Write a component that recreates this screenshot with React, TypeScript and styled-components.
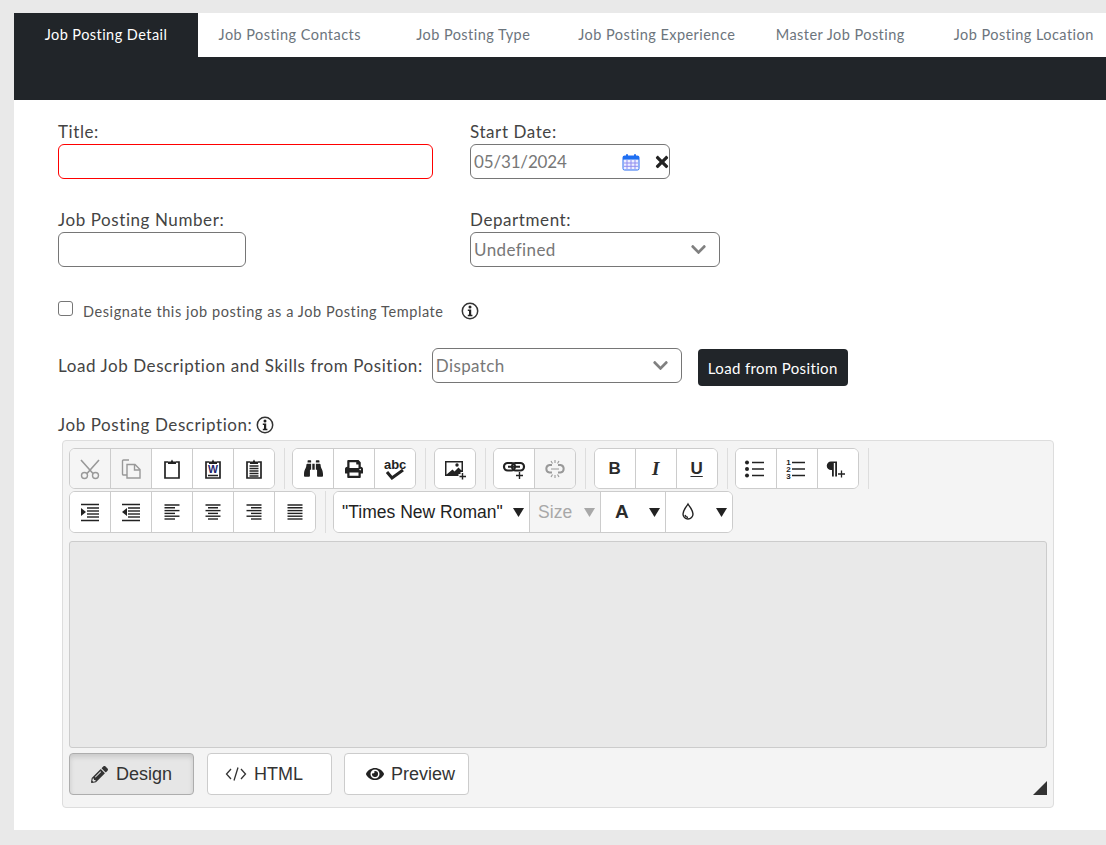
import React from "react";
import styled, { createGlobalStyle } from "styled-components";
import { FaBinoculars, FaPrint, FaPencilAlt, FaEye, FaTimes, FaChevronDown } from "react-icons/fa";

const GlobalStyle = createGlobalStyle`
  html, body {
    margin: 0;
    height: 845px;
    overflow: hidden;
    background: #e9e9e9;
  }
  * { box-sizing: border-box; }
`;

const Card = styled.div`
  margin: 13px 0 0 14px;
  height: 817px;
  background: #fff;
  font-family: "Lato", "Noto Sans", sans-serif;
  overflow: hidden;
`;

const TabBar = styled.div`
  display: grid;
  grid-template-columns: 184px repeat(5, 183.5px);
  height: 44px;
`;

const Tab = styled.div<{ $active?: boolean }>`
  display: flex;
  align-items: center;
  justify-content: center;
  padding-bottom: 1px;
  font-size: 14.5px;
  letter-spacing: 0.45px;
  white-space: nowrap;
  color: ${(p) => (p.$active ? "#fff" : "#6c757d")};
  background: ${(p) => (p.$active ? "#212529" : "#fff")};
`;

const DarkStrip = styled.div`
  height: 43px;
  background: #212529;
`;

const Form = styled.div`
  padding: 20px 52px 0 44px;
`;

const FieldGrid = styled.div`
  display: grid;
  grid-template-columns: 412px 1fr;
  row-gap: 29px;
`;

const Field = styled.div`
  display: flex;
  flex-direction: column;
  gap: 1px;
`;

const Label = styled.label`
  font-size: 17px;
  line-height: 23px;
  letter-spacing: 0.58px;
  color: #444;
  white-space: nowrap;
`;

const RowLabel = styled(Label)`
  margin-top: 6px;
`;

const TextBox = styled.div<{ $w: number; $invalid?: boolean }>`
  width: ${(p) => p.$w}px;
  height: 35px;
  background: #fff;
  border: 1px solid ${(p) => (p.$invalid ? "#f00" : "#767676")};
  border-radius: 6px;
`;

const ComboBox = styled.div<{ $w: number; $ls?: number }>`
  width: ${(p) => p.$w}px;
  height: 35px;
  display: flex;
  align-items: center;
  justify-content: space-between;
  padding: 0 12px 0 3px;
  border: 1px solid #767676;
  border-radius: 6px;
  font-size: 17px;
  letter-spacing: ${(p) => p.$ls ?? 0.4}px;
  color: #777;
`;

const ComboText = styled.span`
  padding-bottom: 1px;
`;

const DateIcons = styled.div`
  display: flex;
  align-items: center;
  gap: 13px;
  margin-right: -14px;
`;

const CheckRow = styled.div`
  display: flex;
  align-items: center;
  height: 24px;
  margin-top: 32px;
`;

const CheckBox = styled.div`
  width: 15px;
  height: 15px;
  margin-top: -6px;
  border: 1px solid #767676;
  border-radius: 3px;
`;

const CheckText = styled.span`
  margin: 0 17px 0 10px;
  font-size: 14.5px;
  letter-spacing: 0.58px;
  color: #555;
`;

const LoadRow = styled.div`
  display: flex;
  align-items: flex-start;
  margin-top: 25px;
  gap: 9px;
`;

const DarkButton = styled.div`
  width: 150px;
  height: 37px;
  margin: 1px 0 0 7px;
  display: flex;
  align-items: center;
  justify-content: center;
  background: #212529;
  color: #fff;
  border-radius: 4px;
  font-size: 15px;
  letter-spacing: 0.35px;
`;

const DescLabel = styled.div`
  display: flex;
  align-items: center;
  gap: 4px;
  margin-top: 27px;
`;

const Editor = styled.div`
  margin: 4px 0 0 4px;
  width: 992px;
  height: 368px;
  padding: 7px 6px 0;
  background: #f4f4f4;
  border: 1px solid #ddd;
  border-radius: 4px;
  font-family: "Liberation Sans", Arial, sans-serif;
`;

const ToolRow = styled.div`
  display: flex;
  margin-bottom: 2px;
`;

const ToolGroup = styled.div`
  display: flex;
  background: #fff;
  border: 1px solid #ccc;
  border-radius: 6px;
  overflow: hidden;
  &:first-child {
    margin-right: -0.4px;
  }
`;

const Sep = styled.div`
  width: 1px;
  margin: 0 7.5px 0 9px;
  background: #ddd;
`;

const ToolButton = styled.div<{ $off?: boolean; $tall?: boolean }>`
  width: 41px;
  height: ${(p) => (p.$tall ? 40 : 39)}px;
  display: flex;
  align-items: center;
  justify-content: center;
  border-right: 1px solid #ccc;
  color: ${(p) => (p.$off ? "#999" : "#222")};
  background: ${(p) => (p.$off ? "#f5f5f5" : "#fff")};
  &:last-child {
    width: 40px;
    border-right: none;
  }
`;

const DropButton = styled.div<{ $w: number; $off?: boolean; $pad?: number }>`
  width: ${(p) => p.$w}px;
  height: 40px;
  display: flex;
  align-items: center;
  justify-content: space-between;
  padding: 0 5px 0 ${(p) => p.$pad ?? 8}px;
  border-right: 1px solid #ccc;
  color: ${(p) => (p.$off ? "#a8a8a8" : "#222")};
  background: ${(p) => (p.$off ? "#f5f5f5" : "#fff")};
  &:last-child {
    border-right: none;
  }
`;

const FontName = styled.span`
  font-size: 17.5px;
  white-space: nowrap;
`;

const Glyph = styled.span<{ $italic?: boolean; $under?: boolean; $big?: boolean }>`
  font-family: ${(p) => (p.$italic ? '"Liberation Serif", serif' : '"Liberation Sans", sans-serif')};
  font-size: ${(p) => (p.$big ? 19 : p.$italic ? 19 : 17)}px;
  font-weight: 700;
  font-style: ${(p) => (p.$italic ? "italic" : "normal")};
  text-decoration: ${(p) => (p.$under ? "underline" : "none")};
  text-underline-offset: 2px;
  color: #2b2b2b;
`;

const Spell = styled.div`
  display: flex;
  flex-direction: column;
  align-items: center;
  line-height: 1;
`;

const SpellText = styled.span`
  font-size: 13px;
  font-weight: 700;
  margin-bottom: -2px;
`;

const EditArea = styled.div`
  height: 207px;
  margin-top: 8px;
  background: #e9e9e9;
  border: 1px solid #ccc;
  border-radius: 3px;
`;

const ModeBar = styled.div`
  display: flex;
  align-items: flex-end;
  gap: 12.5px;
  margin-top: 5px;
`;

const ModeButton = styled.div<{ $active?: boolean; $left?: number; $right?: number }>`
  width: 125px;
  height: 42px;
  display: flex;
  align-items: center;
  justify-content: center;
  gap: ${(p) => (p.$active ? 8 : 7)}px;
  padding: 0 ${(p) => p.$right ?? 0}px 0 ${(p) => p.$left ?? 0}px;
  font-size: 18px;
  color: #333;
  background: ${(p) => (p.$active ? "#e6e6e6" : "#fff")};
  border: 1px solid ${(p) => (p.$active ? "#adadad" : "#ccc")};
  border-radius: 4px;
  box-shadow: ${(p) => (p.$active ? "inset 0 3px 5px rgba(0,0,0,.125)" : "none")};
`;

const Grip = styled.svg`
  margin-left: auto;
`;

const tabs = [
  "Job Posting Detail",
  "Job Posting Contacts",
  "Job Posting Type",
  "Job Posting Experience",
  "Master Job Posting",
  "Job Posting Location",
];

const Ic = ({ children }: { children: React.ReactNode }) => (
  <svg width={24} height={24} viewBox="0 0 24 24" fill="none" stroke="currentColor" strokeWidth="1.4">
    {children}
  </svg>
);

const Lines = ({ ys, x1, x2 }: { ys: number[]; x1: number; x2: number }) => (
  <>
    {ys.map((y) => (
      <path key={y} d={`M${x1} ${y}H${x2}`} />
    ))}
  </>
);

const Clipboard = ({ children }: { children?: React.ReactNode }) => (
  <Ic>
    <path d="M8 5H5v16h14V5h-3" strokeWidth="1.700" />
    <path d="M8 7V4.500h2.800L12 2.500l1.200 2H16V7z" fill="currentColor" stroke="none" />
    {children}
  </Ic>
);

const CutIcon = () => (
  <Ic>
    <path d="M3 3l12 13.500M21 3L9 16.500" strokeWidth="1.600" />
    <circle cx="6.500" cy="18.500" r="3" />
    <circle cx="17.500" cy="18.500" r="3" />
  </Ic>
);

const CopyIcon = () => (
  <Ic>
    <path d="M8 18H4.500a1 1 0 0 1-1-1V4a1 1 0 0 1 1-1H10" />
    <path d="M8 7.500h8l5 5V21H8zM15.500 7.500v5.500H21" />
  </Ic>
);

const InfoIcon = () => (
  <svg width="18" height="18" viewBox="0 0 18 18">
    <circle cx="9" cy="9" r="7.700" fill="none" stroke="#333" strokeWidth="1.500" />
    <circle cx="9" cy="5" r="1.500" fill="#222" />
    <path d="M6.800 7.600h3.400v5.200h1.200v1.500H6.800v-1.500h1.200V9.100H6.800z" fill="#222" />
  </svg>
);

const CalendarIcon = () => (
  <svg width="18" height="18" viewBox="0 0 18 18">
    <rect x="1" y="3" width="16" height="14" rx="1.500" fill="#eef0ff" stroke="#2a6df0" />
    <rect x="1" y="3" width="16" height="3.600" fill="#1f6ff2" />
    <rect x="4" y="1" width="2" height="4" rx="1" fill="#1f6ff2" />
    <rect x="12" y="1" width="2" height="4" rx="1" fill="#1f6ff2" />
    <path d="M5 7v9M9 7v9M13 7v9M2 10h14M2 13.300h14" stroke="#8f8cf0" strokeWidth="1" />
  </svg>
);

const Triangle = () => (
  <svg width={11} height={9} viewBox="0 0 10 8">
    <path d="M0 0h10L5 8z" fill="currentColor" />
  </svg>
);

const Indent = ({ out }: { out?: boolean }) => (
  <Ic>
    <Lines ys={[8, 11, 14, 17]} x1={9} x2={21} />
    <path d="M3 4.500h18M3 20.500h18" />
    <path d={out ? "M8 8v8l-5-4z" : "M3 8v8l5-4z"} fill="currentColor" stroke="none" />
  </Ic>
);

const Align = ({ rows }: { rows: [number, number][] }) => (
  <Ic>
    {rows.map(([a, b], i) => (
      <path key={i} d={`M${a} ${5 + i * 2.8}H${b}`} strokeWidth="1.400" />
    ))}
  </Ic>
);

const row1: { el: React.ReactNode; off?: boolean }[][] = [
  [
    { el: <CutIcon />, off: true },
    { el: <CopyIcon />, off: true },
    { el: <Clipboard /> },
    {
      el: (
        <Clipboard>
          <text x="12" y="15.500" fontSize="10.500" fontWeight="700" fontFamily="Liberation Sans" textAnchor="middle" fill="#23236b" stroke="none">W</text>
          <path d="M7 18.500h10" />
        </Clipboard>
      ),
    },
    { el: <Clipboard><Lines ys={[9, 11.5, 14, 16.5, 19]} x1={7.5} x2={16.5} /></Clipboard> },
  ],
  [
    { el: <FaBinoculars size={19} /> },
    { el: <FaPrint size={18} /> },
    {
      el: (
        <Spell>
          <SpellText>abc</SpellText>
          <svg width="20" height="11" viewBox="0 0 20 11">
            <path d="M2 3l5 6 11-8" fill="none" stroke="currentColor" strokeWidth="3" />
          </svg>
        </Spell>
      ),
    },
  ],
  [
    {
      el: (
        <Ic>
          <path d="M2 4h18v15H2z" fill="#222" stroke="none" />
          <path d="M3.500 5.500h15v8l-3-3-4 4-2-2-6 5z" fill="#fff" stroke="none" />
          <circle cx="14" cy="8" r="1.700" fill="#222" stroke="none" />
          <path d="M19.500 15v8M15.500 19h8" fill="none" stroke="#f8f8f8" strokeWidth="4" />
          <path d="M19.500 16v6.500M16.500 19.500h6.500" strokeWidth="1.400" />
        </Ic>
      ),
    },
  ],
  [
    {
      el: (
        <Ic>
          <rect x="2" y="6" width="11" height="7.500" rx="3.700" strokeWidth="2.200" />
          <rect x="10" y="6" width="12" height="7.500" rx="3.700" strokeWidth="2.200" />
          <path d="M6 9.700h12" strokeWidth="2" />
          <path d="M17.500 15v7M14 18.500h7" strokeWidth="1.400" />
        </Ic>
      ),
    },
    {
      el: (
        <Ic>
          <path d="M9 8H6.500a3.800 3.800 0 0 0 0 7.500H9M15 8h2.500a3.800 3.800 0 0 1 0 7.500H15" strokeWidth="2" />
          <path d="M8 12h8M12 3v3M8 4l1.500 2.500M16 4l-1.500 2.500M12 18v3M8 20l1.500-2.500M16 20l-1.500-2.500" strokeWidth="1.100" />
        </Ic>
      ),
      off: true,
    },
  ],
  [
    { el: <Glyph>B</Glyph> },
    { el: <Glyph $italic>I</Glyph> },
    { el: <Glyph $under>U</Glyph> },
  ],
  [
    {
      el: (
        <Ic>
          <circle cx="3" cy="5.500" r="2" fill="currentColor" stroke="none" />
          <circle cx="3" cy="12" r="2" fill="currentColor" stroke="none" />
          <circle cx="3" cy="18.500" r="2" fill="currentColor" stroke="none" />
          <Lines ys={[5.5, 12, 18.5]} x1={8} x2={20} />
        </Ic>
      ),
    },
    {
      el: (
        <Ic>
          <Lines ys={[5.5, 12, 18.5]} x1={7} x2={20} />
          <g fontSize="8" fontWeight="700" fontFamily="Liberation Sans" textAnchor="middle" fill="currentColor" stroke="none">
            <text x="3.500" y="8">1</text>
            <text x="3.500" y="15">2</text>
            <text x="3.500" y="22">3</text>
          </g>
        </Ic>
      ),
    },
    {
      el: (
        <Ic>
          <path d="M6 4.500H5a4 4 0 0 0 0 8.500h1v6.500h1.800V6h1.400v13.500H11V4.500z" fill="currentColor" stroke="none" />
          <path d="M15.500 13.500v7M12 17h7" strokeWidth="1.300" />
        </Ic>
      ),
    },
  ],
];

const row2 = [
  <Indent />,
  <Indent out />,
  <Align rows={[[4.5, 19.5], [4.5, 15], [4.5, 19.5], [4.5, 15], [4.5, 19.5], [4.5, 15]]} />,
  <Align rows={[[4.5, 19.5], [7, 17], [4.5, 19.5], [7, 17], [4.5, 19.5], [7, 17]]} />,
  <Align rows={[[4.5, 19.5], [9, 19.5], [4.5, 19.5], [9, 19.5], [4.5, 19.5], [9, 19.5]]} />,
  <Align rows={[[4.5, 19.5], [4.5, 19.5], [4.5, 19.5], [4.5, 19.5], [4.5, 19.5], [4.5, 19.5]]} />,
];

export default function App() {
  return (
    <>
      <GlobalStyle />
      <Card>
        <TabBar>
          {tabs.map((t, i) => (
            <Tab key={t} $active={i === 0}>{t}</Tab>
          ))}
        </TabBar>
        <DarkStrip />
        <Form>
          <FieldGrid>
            <Field>
              <Label>Title:</Label>
              <TextBox $w={375} $invalid />
            </Field>
            <Field>
              <Label>Start Date:</Label>
              <ComboBox $w={200} $ls={-0.15}>
                <ComboText>05/31/2024</ComboText>
                <DateIcons>
                  <CalendarIcon />
                  <FaTimes size={18} color="#222" />
                </DateIcons>
              </ComboBox>
            </Field>
            <Field>
              <Label>Job Posting Number:</Label>
              <TextBox $w={188} />
            </Field>
            <Field>
              <Label>Department:</Label>
              <ComboBox $w={250}>
                <ComboText>Undefined</ComboText>
                <FaChevronDown size={17} color="#808080" />
              </ComboBox>
            </Field>
          </FieldGrid>

          <CheckRow>
            <CheckBox />
            <CheckText>Designate this job posting as a Job Posting Template</CheckText>
            <InfoIcon />
          </CheckRow>

          <LoadRow>
            <RowLabel>Load Job Description and Skills from Position:</RowLabel>
            <ComboBox $w={250}>
              <ComboText>Dispatch</ComboText>
              <FaChevronDown size={17} color="#808080" />
            </ComboBox>
            <DarkButton>Load from Position</DarkButton>
          </LoadRow>

          <DescLabel>
            <Label>Job Posting Description:</Label>
            <InfoIcon />
          </DescLabel>

          <Editor>
            <ToolRow>
              {row1.map((group, g) => (
                <React.Fragment key={g}>
                  <ToolGroup>
                    {group.map((b, i) => (
                      <ToolButton key={i} $off={b.off}>{b.el}</ToolButton>
                    ))}
                  </ToolGroup>
                  <Sep />
                </React.Fragment>
              ))}
            </ToolRow>
            <ToolRow>
              <ToolGroup>
                {row2.map((el, i) => (
                  <ToolButton key={i} $tall>{el}</ToolButton>
                ))}
              </ToolGroup>
              <Sep />
              <ToolGroup>
                <DropButton $w={196}>
                  <FontName>"Times New Roman"</FontName>
                  <Triangle />
                </DropButton>
                <DropButton $w={71} $off>
                  <FontName>Size</FontName>
                  <Triangle />
                </DropButton>
                <DropButton $w={65} $pad={14}>
                  <Glyph $big>A</Glyph>
                  <Triangle />
                </DropButton>
                <DropButton $w={66} $pad={13}>
                  <svg width="18" height="20" viewBox="0 0 18 20" fill="none" stroke="#222" strokeWidth="1.400">
                    <path d="M9 2c-2 3.500-5 6-5 10a5 5 0 0 0 10 0c0-4-3-6.500-5-10z" />
                    <path d="M6 13c.5 1.500 1.500 2.300 3 2.500" />
                  </svg>
                  <Triangle />
                </DropButton>
              </ToolGroup>
            </ToolRow>
            <EditArea />
            <ModeBar>
              <ModeButton $active>
                <FaPencilAlt size={17} color="#333" />
                Design
              </ModeButton>
              <ModeButton $right={10}>
                <svg width="22" height="16" viewBox="0 0 22 16" fill="none" stroke="#333" strokeWidth="1.300">
                  <path d="M6 3L1.500 8 6 13M16 3l4.500 5L16 13M13 1.500L9 14.500" />
                </svg>
                HTML
              </ModeButton>
              <ModeButton $left={8}>
                <FaEye size={18} color="#222" />
                Preview
              </ModeButton>
              <Grip width="14" height="14" viewBox="0 0 14 14">
                <path d="M14 0v14H0z" fill="#333" />
              </Grip>
            </ModeBar>
          </Editor>
        </Form>
      </Card>
    </>
  );
}
